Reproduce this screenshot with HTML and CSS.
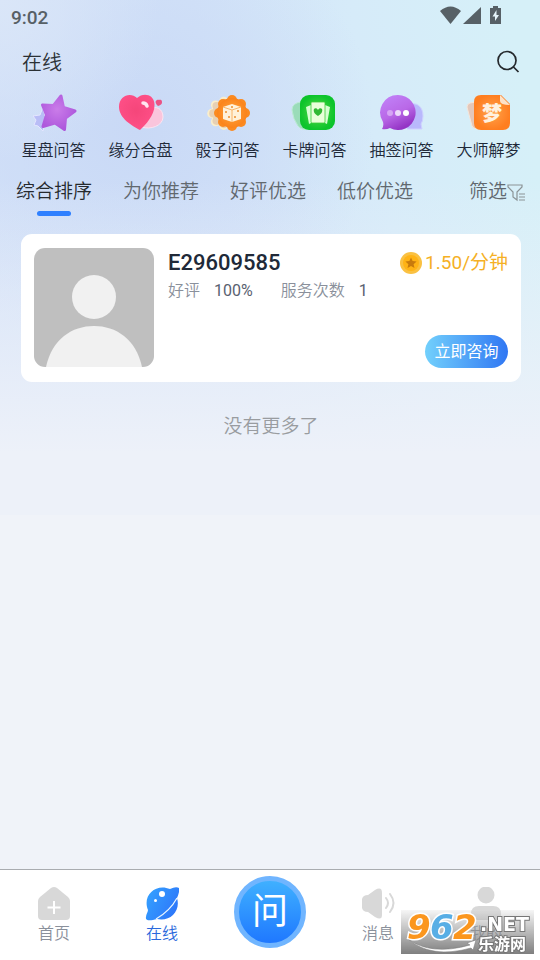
FILE: index.html
```html
<!DOCTYPE html>
<html lang="zh-CN">
    <head>
        <meta charset="utf-8">
        <meta name="viewport" content="width=device-width, initial-scale=1">
        <title>在线</title>
        <link rel="stylesheet" href="styles.css">
    </head>
    <body>
        <div class="status-bar">
            <span class="clock">9:02</span>
            <svg class="status-icons" width="62" height="20" viewBox="0 0 62 20">
                <path d="M0 4Q10.500-5 21 4L10.500 17Z"/>
                <path d="M23 17L41 0V17Z"/>
                <path d="M50 1h3V-1h5v2h3v16H50Z"/>
                <path d="M56.500 3l-4 6.500h2.500V14l4-6h-2.500Z" fill="#e6f4fa"/>
            </svg>
        </div>

        <header class="top">
            <h1>在线</h1>
            <button class="search" aria-label="搜索">
                <svg width="24" height="24" viewBox="0 0 24 24" fill="none" stroke="#25292d" stroke-width="1.700">
                    <circle cx="11" cy="11.500" r="9"/>
                    <path d="M17 17.500l5.500 5.500"/>
                </svg>
            </button>
        </header>

        <nav class="topics">
            <a href="#">
                <svg width="48" height="40" viewBox="0 0 48 40">
                    <defs>
                        <radialGradient id="star" cx=".45" cy=".4" r=".6"><stop offset="0" stop-color="#ca7ce9"/><stop offset="1" stop-color="#ae58dc"/></radialGradient>
                    </defs>
                    <path d="M13 14l2 9 8 5-8 2-2 8-5-5-4-1 2-5-3-4 7-1Z" fill="#b9bdf6" stroke="#e4e6ff" stroke-linejoin="round"/>
                    <path d="M31 3l2.500 11.500L45 18l-9.500 7-1 11.500-9.500-6.500-12 3.500 3.500-11.500-4-10 11 .5Z" fill="url(#star)" stroke="url(#star)" stroke-width="3" stroke-linejoin="round"/>
                </svg>
                <span>星盘问答</span>
            </a>
            <a href="#">
                <svg width="48" height="40" viewBox="0 0 48 40">
                    <defs>
                        <radialGradient id="heart" cx=".48" cy=".45" r=".6"><stop offset="0" stop-color="#f5467a"/><stop offset="1" stop-color="#ff5088"/></radialGradient>
                    </defs>
                    <path d="M25 34c8 3 21-1 21-10s-8-12-13-7Z" fill="#fac5dc" stroke="#fbe5f1"/>
                    <path d="M23 37C15 33 2 25 2 14 2 2 14-1 20 5c6-6 17-4 17.500 6C38 22 29 31 23 37Z" fill="url(#heart)"/>
                    <path d="M26 10q3 0 4 3" fill="none" stroke="#ffe6ef" stroke-width="3.500" stroke-linecap="round"/>
                    <path d="M41 13c-3-3-3-5-1-6 1-.5 2 0 2 0s3-1 3 2-2 3-4 4Z" fill="#eb5284"/>
                </svg>
                <span>缘分合盘</span>
            </a>
            <a href="#">
                <svg width="48" height="40" viewBox="0 0 48 40">
                    <defs>
                        <radialGradient id="dice"><stop offset="0" stop-color="#ffa63f"/><stop offset="1" stop-color="#fb831a"/></radialGradient>
                        <g id="scallop">
                            <circle cx="28" cy="20" r="14"/>
                            <circle cx="28" cy="7" r="5"/><circle cx="37" cy="11" r="5"/><circle cx="41" cy="20" r="5"/><circle cx="37" cy="29" r="5"/>
                            <circle cx="28" cy="33" r="5"/><circle cx="19" cy="29" r="5"/><circle cx="15" cy="20" r="5"/><circle cx="19" cy="11" r="5"/>
                        </g>
                    </defs>
                    <use href="#scallop" transform="translate(-6 2) scale(.92)" fill="#faeecb"/>
                    <use href="#scallop" transform="translate(-3 4) scale(.82)" fill="#e7d0b4"/>
                    <use href="#scallop" fill="#fb8a20"/>
                    <circle cx="28" cy="20" r="15" fill="url(#dice)"/>
                    <path d="M19 14l9-3 9 3v12l-9 3-9-3Z" fill="#fff1d9"/>
                    <path d="M19 14l9 3 9-3M28 17v12" fill="none" stroke="#f8b469"/>
                    <g fill="#ec8c2d"><circle cx="28" cy="14" r="1"/><circle cx="22" cy="19" r="1"/><circle cx="25" cy="24" r="1"/><circle cx="34" cy="18" r="1"/><circle cx="31" cy="24" r="1"/></g>
                </svg>
                <span>骰子问答</span>
            </a>
            <a href="#">
                <svg width="48" height="40" viewBox="0 0 48 40">
                    <defs>
                        <radialGradient id="cards"><stop offset="0" stop-color="#59da49"/><stop offset="1" stop-color="#0dc42b"/></radialGradient>
                    </defs>
                    <path d="M10 9q-9 1-9 8 1 9 6 16 4 5 12 3V9Z" fill="#9adcb9" stroke="#bcead4"/>
                    <rect x="9" y="2" width="35" height="35" rx="9" fill="url(#cards)"/>
                    <path d="M15 14l5-2v18l-2 1ZM39 14l-5-2v18l2 1Z" fill="#d6ffd1"/>
                    <rect x="20" y="9" width="14" height="21" rx="1" fill="#eaffda" stroke="#3dcb3b" stroke-width=".8"/>
                    <path d="M27 23c-3-2-5-4-4-7 1-1 3-1 4 1 1-2 3-2 4-1 1 3-1 5-4 7Z" fill="#32b934"/>
                </svg>
                <span>卡牌问答</span>
            </a>
            <a href="#">
                <svg width="48" height="40" viewBox="0 0 48 40">
                    <defs>
                        <linearGradient id="chat" x2=".5" y2="1"><stop offset="0" stop-color="#c285fa"/><stop offset=".6" stop-color="#b968e7"/><stop offset="1" stop-color="#9434c5"/></linearGradient>
                    </defs>
                    <path d="M30 12c9-4 15 2 15 11q0 5-2 8l1 5q-9 0-15 0Z" fill="#b9b8fc" stroke="#ced1ff"/>
                    <path d="M20 2a17.500 17.500 0 1 1-8 33q-4 2-8 1 2-3 1-7A17.500 17.500 0 0 1 20 2Z" fill="url(#chat)"/>
                    <circle cx="12" cy="20" r="3" fill="#d6a4f4"/><circle cx="20" cy="20" r="3" fill="#edd8fa"/><circle cx="28" cy="20" r="3" fill="#fff"/>
                </svg>
                <span>抽签问答</span>
            </a>
            <a href="#">
                <svg width="48" height="40" viewBox="0 0 48 40">
                    <defs>
                        <radialGradient id="dream"><stop offset="0" stop-color="#ffa34d"/><stop offset="1" stop-color="#ff7e20"/></radialGradient>
                    </defs>
                    <path d="M11 9L5 10q-3 1-3 4l5 19q1 3 6 3Z" fill="#e3c7ba" stroke="#f6e5d9"/>
                    <path d="M16 2h20l9 9v19q0 7-7 7H16q-7 0-7-7V9q0-7 7-7Z" fill="url(#dream)"/>
                    <path d="M35 2v6q0 4 10 4Z" fill="#fde2c8"/>
                    <text class="dream-text" x="27" y="28" text-anchor="middle">梦</text>
                </svg>
                <span>大师解梦</span>
            </a>
        </nav>

        <div class="sorts">
            <button class="sort active">综合排序</button>
            <button class="sort">为你推荐</button>
            <button class="sort">好评优选</button>
            <button class="sort">低价优选</button>
            <button class="sort filter">筛选<svg width="19" height="18" viewBox="0 0 19 18" fill="none" stroke="#8b9396" stroke-width="1.200">
                <path d="M1 1h14v2L10 8v8l-4-3V8L1 3ZM12 10h6M12 13h6M12 16h6"/>
            </svg></button>
        </div>

        <main>
            <article class="card">
                <svg class="avatar" width="120" height="119" viewBox="0 0 120 119">
                    <rect width="120" height="119" fill="#bfbfbf"/>
                    <circle cx="60" cy="49" r="22" fill="#f1f1f1"/>
                    <path d="M12 119C18 91 38 78 60 78s42 13 48 41Z" fill="#f1f1f1"/>
                </svg>
                <div class="info">
                    <div class="line">
                        <h2>E29609585</h2>
                        <span class="price">
                            <svg width="22" height="22" viewBox="0 0 22 22">
                                <circle cx="11" cy="11" r="11" fill="#fac142"/>
                                <circle cx="11" cy="11" r="8" fill="#ffb315"/>
                                <path d="M11 5.500l1.600 3.600 4 .4-3 2.700.9 3.900-3.500-2-3.500 2 .9-3.900-3-2.700 4-.4Z" fill="#c87b0d"/>
                            </svg>
                            <span>1.50/分钟</span>
                        </span>
                    </div>
                    <dl class="stats">
                        <dt>好评</dt><dd>100%</dd>
                        <dt>服务次数</dt><dd>1</dd>
                    </dl>
                    <button class="consult">立即咨询</button>
                </div>
            </article>
            <p class="no-more">没有更多了</p>
        </main>

        <nav class="tab-bar">
            <a href="#">
                <svg width="34" height="34" viewBox="0 0 34 34">
                    <path d="M14 1q3-2 6 0l11 9q2 2 2 4v15q0 4-4 4H5q-4 0-4-4V14q0-2 2-4Z" fill="#d8d8d8"/>
                    <path d="M17 14v13M10.500 20.500h13" stroke="#fff" stroke-width="2"/>
                </svg>
                首页
            </a>
            <a href="#" class="active">
                <svg width="34" height="34" viewBox="0 0 34 34">
                    <defs><linearGradient id="planet" x2="1" y2=".5"><stop offset="0" stop-color="#35a4ff"/><stop offset="1" stop-color="#2d78fa"/></linearGradient></defs>
                    <path d="M25 2q6-3 9-1 1 3-2 10c4 13-7 24-20 21-7 2-12 2-11-2 0-3 2-5 2-7C-3 8 11-4 25 2Z" fill="url(#planet)"/>
                    <path d="M32 11Q25 24 11 32" stroke="#eaf6ff" stroke-width="1.200" fill="none"/>
                    <circle cx="17" cy="7" r="3" fill="#fff"/><circle cx="10.500" cy="13.500" r="1.500" fill="#fff"/>
                </svg>
                在线
            </a>
            <a href="#" class="ask"><span>问</span></a>
            <a href="#">
                <svg width="34" height="34" viewBox="0 0 34 34">
                    <path d="M1 12q1-4 6-4l7-5q7-4 7 3v22q0 6-7 2l-7-5q-5 0-6-4Z" fill="#d8d8d8"/>
                    <path d="M25 11q4 5 0 10M29 7q7 9 0 18" fill="none" stroke="#d8d8d8" stroke-width="2" stroke-linecap="round"/>
                </svg>
                消息
            </a>
            <a href="#">
                <svg width="34" height="34" viewBox="0 0 34 34" fill="#d8d8d8">
                    <circle cx="17" cy="8" r="8.500"/>
                    <path d="M2 27q0-8 8-8h14q8 0 8 8v6H2Z"/>
                </svg>
                我的
            </a>
        </nav>

        <div class="watermark">
            <svg width="133" height="44" viewBox="0 0 133 44">
                <path d="M7 29Q30 46 69 35l-3-2 9-3-3 10-2-2Q30 49 7 29Z" fill="#fff" stroke="#777" stroke-width=".5"/>
                <g class="wm-number">
                    <text x="6" y="29" fill="#fb961e">9</text>
                    <text x="29" y="29" fill="#58aee5">6</text>
                    <text x="52" y="29" fill="#fb961e">2</text>
                </g>
                <text class="wm-net" x="79" y="21">.NET</text>
                <text class="wm-name" x="77" y="40">乐游网</text>
            </svg>
        </div>
    </body>
</html>
```
FILE: styles.css
```css
* { box-sizing: border-box; }

body {
    display: flex;
    flex-direction: column;
    min-height: 100vh;
    margin: 0;
    font-family: Roboto, "Noto Sans CJK SC", sans-serif;
    font-weight: 400;
    color: #202938;
    background-color: #f0f3f9;
    background-image:
        linear-gradient(to bottom, rgba(237,241,249,0) 35%, #edf1f9 88%),
        radial-gradient(circle at 0 0, #dae6f8, rgba(218,230,248,0) 160px),
        radial-gradient(ellipse at 25% 25%, #c9d9f6, rgba(201,217,246,0) 240px),
        linear-gradient(80deg, #d3e1f8 0%, #d3e3f8 45%, #d6ebf9 70%, #d6f0f8 95%);
    background-repeat: no-repeat;
    background-size: 100% 515px;
}

h1,
h2,
p,
dl,
dd { margin: 0; }

button {
    padding: 0;
    border: 0;
    background: none;
    font: inherit;
    color: inherit;
}

a {
    color: inherit;
    text-decoration: none;
}

svg { display: block; }

.status-bar {
    display: flex;
    justify-content: space-between;
    align-items: center;
    height: 34px;
    padding: 0 38px 0 11px;
}

.clock {
    font-size: 19px;
    font-weight: 500;
    color: #576066;
}

.status-icons {
    fill: #576066;
    overflow: visible;
}

.top {
    display: flex;
    justify-content: space-between;
    align-items: center;
    height: 56px;
    padding: 0 20px 2px 22px;
}

.top h1 {
    font-size: 20px;
    font-weight: 350;
    color: #2b3035;
}

.topics {
    display: grid;
    grid-template-columns: repeat(6, 1fr);
    padding: 3px 8px 0 10px;
}

.topics a {
    display: flex;
    flex-direction: column;
    align-items: center;
    gap: 6px;
    font-size: 16px;
    font-weight: 350;
    line-height: 24px;
}

.dream-text {
    font-size: 20px;
    font-weight: 900;
    fill: #fff1df;
}

/* sort tabs */
.sorts {
    display: flex;
    gap: 31px;
    height: 53px;
    padding: 15px 14px 0 16px;
    font-size: 19px;
    font-weight: 350;
    line-height: 28px;
    color: #61686e;
}

.sort {
    display: flex;
    flex-direction: column;
    align-items: center;
    gap: 5px;
    white-space: nowrap;
}

.sort.active { color: #25292d; }

.sort.active::after {
    content: "";
    width: 34px;
    height: 7px;
    border-radius: 4px;
    background: #2f80ff;
}

.sort.filter {
    flex-direction: row;
    align-items: flex-start;
    gap: 0;
    margin-left: auto;
}

.filter svg { margin-top: 6px; }

main {
    flex: 1;
    padding: 18px 19px 0 21px;
}

.card {
    display: flex;
    gap: 14px;
    padding: 14px 13px;
    border-radius: 11px;
    background: #fff;
}

.avatar {
    flex: none;
    margin-bottom: 1px;
    border-radius: 11px;
}

.info {
    display: flex;
    flex: 1;
    flex-direction: column;
}

.line {
    display: flex;
    justify-content: space-between;
    align-items: center;
    height: 29px;
}

.line h2 {
    font-size: 22px;
    font-weight: 500;
}

.price {
    display: flex;
    align-items: center;
    gap: 3px;
    font-size: 19px;
    line-height: 24px;
    color: #f5b024;
}

.stats {
    display: flex;
    font-size: 16px;
    line-height: 28px;
}

.stats dt {
    font-weight: 350;
    color: #8a909b;
}

.stats dd {
    margin: 0 28px 0 14px;
    color: #596170;
}

.consult {
    align-self: flex-end;
    width: 83px;
    height: 33px;
    margin-top: auto;
    padding-bottom: 4px;
    border-radius: 17px;
    background: linear-gradient(to right, #72d0fc, #3077f3);
    font-size: 16px;
    color: #fff;
}

.no-more {
    padding: 31px 0;
    font-size: 19px;
    font-weight: 350;
    line-height: 28px;
    text-align: center;
    color: #999ca0;
}

/* bottom bar */
.tab-bar {
    display: flex;
    height: 91px;
    border-top: 1px solid #a9acb0;
    background: #fff;
}

.tab-bar a {
    display: flex;
    flex: 1;
    flex-direction: column;
    align-items: center;
    padding-top: 17px;
    font-size: 16px;
    font-weight: 350;
    line-height: 25px;
    color: #8a909b;
}

.tab-bar a.active { color: #2a69dc; }

.tab-bar a.ask { padding-top: 6px; }

.ask span {
    width: 72px;
    height: 72px;
    border: 5px solid #70b5ff;
    border-radius: 50%;
    background: linear-gradient(#3fb0ff, #1f78ff);
    font-size: 36px;
    font-weight: 400;
    line-height: 62px;
    text-align: center;
    color: #fff;
}

.watermark {
    position: fixed;
    right: 6px;
    bottom: 6px;
    background: linear-gradient(rgba(225,225,225,.3), rgba(120,120,120,.95));
}

.wm-number {
    font: italic 700 34px "DejaVu Sans", sans-serif;
    stroke: #fff;
    stroke-width: 3px;
    paint-order: stroke;
}

.wm-net,
.wm-name {
    fill: #fff;
    stroke: #777;
    stroke-width: 2px;
    paint-order: stroke;
}

.wm-net { font: 700 19px "DejaVu Sans", sans-serif; }

.wm-name { font: 700 16px "Noto Sans CJK SC", sans-serif; }
```
